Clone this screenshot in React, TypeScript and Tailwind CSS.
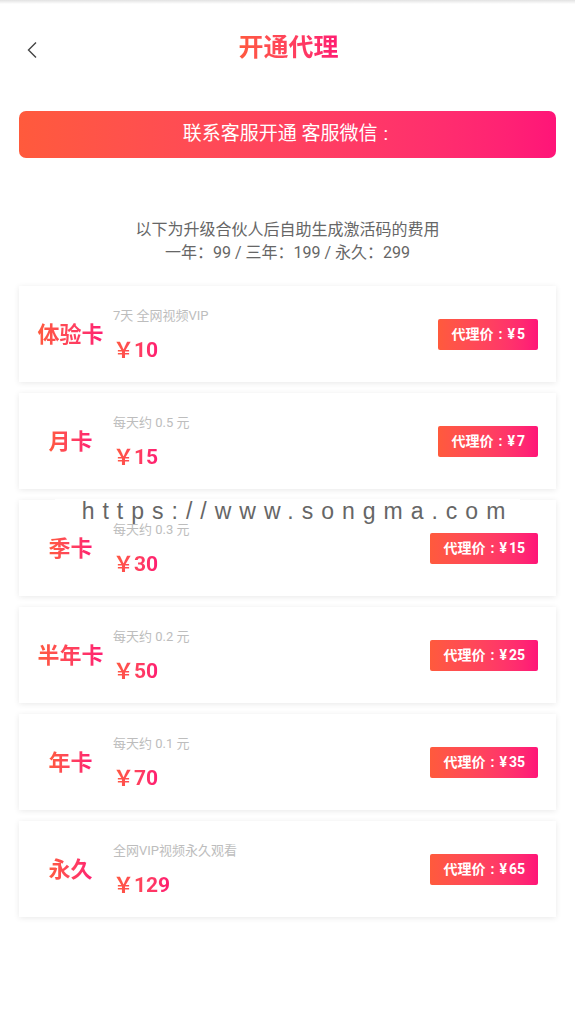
import React from "react";

const cards = [
  { name: "体验卡", desc: "7天 全网视频VIP", price: "10", agent: "5" },
  { name: "月卡", desc: "每天约 0.5 元", price: "15", agent: "7" },
  { name: "季卡", desc: "每天约 0.3 元", price: "30", agent: "15" },
  { name: "半年卡", desc: "每天约 0.2 元", price: "50", agent: "25" },
  { name: "年卡", desc: "每天约 0.1 元", price: "70", agent: "35" },
  { name: "永久", desc: "全网VIP视频永久观看", price: "129", agent: "65" },
];

const font = { fontFamily: "Roboto, 'Noto Sans CJK SC', sans-serif" } as const;

export default function App() {
  return (
    <div className="relative w-[575px] min-h-[1023px] bg-white" style={font}>
      <div className="h-[4px] bg-gradient-to-b from-[#e2e2e2] to-white" />
      <div className="relative flex h-[88px] items-center justify-center">
        <svg
          className="absolute left-[26px] top-[37px]"
          width="12"
          height="18"
          viewBox="0 0 12 18"
          fill="none"
        >
          <path d="M10 1.5 L2.5 9 L10 16.5" stroke="#444" strokeWidth="1.4" />
        </svg>
        <h1 className="bg-gradient-to-r from-[#ff5a3c] to-[#ff1a72] bg-clip-text pl-[2px] text-[25px] font-bold text-transparent">
          开通代理
        </h1>
      </div>

      <div className="mx-[19px] mt-[19px] flex h-[47px] items-center justify-center rounded-[7px] bg-gradient-to-r from-[#ff5a3c] to-[#ff1478] text-[19px] text-white">
        <span className="pl-[2px]">联系客服开通 客服微信</span>
        <span className="px-[6px]">:</span>
      </div>

      <div className="mt-[60px] text-center text-[16px] leading-[23px] text-[#666]">
        <div>以下为升级合伙人后自助生成激活码的费用</div>
        <div>一年：99 / 三年：199 / 永久：299</div>
      </div>

      <div className="mx-[19px] mt-[22px] flex flex-col gap-[11px]">
        {cards.map((c) => (
          <div
            key={c.name}
            className="flex h-[96px] items-center bg-white shadow-[0_1px_6px_rgba(0,0,0,0.09)]"
          >
            <div className="flex w-[94px] justify-center pl-[9px]">
              <span className="bg-gradient-to-r from-[#ff5a3c] to-[#ff1a72] bg-clip-text text-[22px] font-bold text-transparent">
                {c.name}
              </span>
            </div>
            <div className="flex flex-1 flex-col self-start pt-[21px]">
              <div className="text-[13px] leading-[18px] text-[#bdbdbd]">{c.desc}</div>
              <div className="mt-[11px] flex">
                <span className="bg-gradient-to-r from-[#ff5a3c] to-[#ff1a72] bg-clip-text text-[21px] font-bold leading-[28px] text-transparent">
                  ￥{c.price}
                </span>
              </div>
            </div>
            <div className="mr-[18px] flex h-[31px] items-center rounded-[2px] bg-gradient-to-r from-[#ff5a3c] to-[#ff1478] px-[13px] text-[14px] font-bold text-white">
              <span>代理价</span>
              <span className="px-[5px]">:</span>
              <span className="mr-[2px]">¥</span>
              <span>{c.agent}</span>
            </div>
          </div>
        ))}
      </div>

      <div
        className="absolute left-[55px] top-[499px] flex h-[24px] w-[465px] items-center justify-center bg-white text-[23px] tracking-[8px] text-[#666]"
        style={{ fontFamily: "'Liberation Sans', sans-serif" }}
      >
        <span className="pl-[20px]">https://www.songma.com</span>
      </div>
    </div>
  );
}
